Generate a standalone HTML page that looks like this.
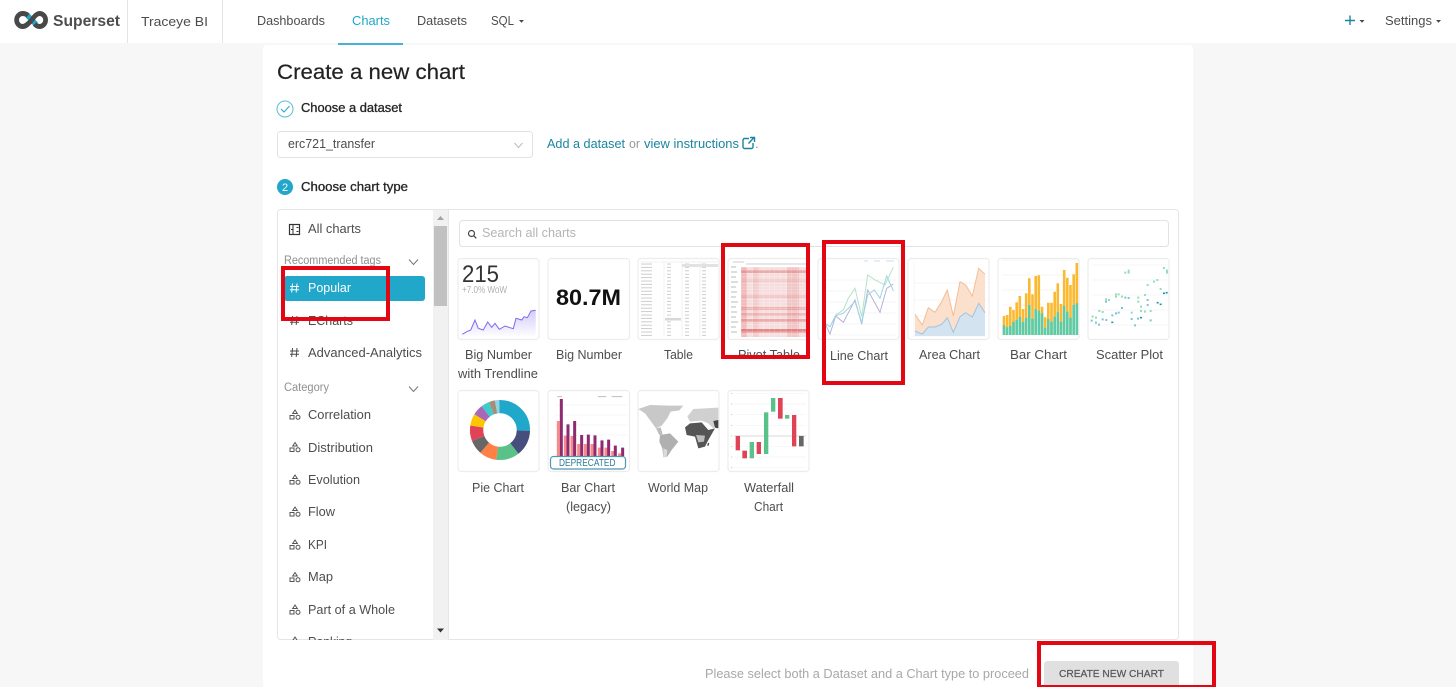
<!DOCTYPE html>
<html><head><meta charset="utf-8"><title>Create a new chart</title>
<style>
html,body{margin:0;padding:0;width:1456px;height:687px;overflow:hidden;background:#f7f7f7}
svg{display:block}
text{font-family:"Liberation Sans",sans-serif;font-size:12.8px;fill:#4d4d4d}
.m{stroke:#333;stroke-width:.35px;fill:#222}
.g{font-size:11.5px;fill:#8f8f8f}
.l{text-anchor:middle;font-size:12.8px}
.tile{fill:#fff;stroke:#ececec;stroke-width:1.2}
.red{fill:none;stroke:#e30613;stroke-width:4}
.ic{fill:none;stroke:#555;stroke-width:1}
</style></head><body>
<svg width="1456" height="687" viewBox="0 0 1456 687" xmlns="http://www.w3.org/2000/svg">
<defs>
<clipPath id="pc"><rect x="278" y="210" width="155" height="430"/></clipPath>
<linearGradient id="sp" x1="0" y1="0" x2="0" y2="1"><stop offset="0" stop-color="#b9b0f5" stop-opacity=".65"/><stop offset="1" stop-color="#b9b0f5" stop-opacity=".03"/></linearGradient>
<pattern id="gridw" x="741" y="267" width="5.6" height="3.2" patternUnits="userSpaceOnUse"><path d="M0 0H5.6M0 0V3.2" stroke="#fff" stroke-width=".8" fill="none" opacity=".4"/></pattern>
<pattern id="tr" x="640" y="263" width="80" height="3.4" patternUnits="userSpaceOnUse"><path d="M1 1H12M27 1H31M45 1H49M62 1H66" stroke="#c4c4c4" stroke-width=".9" fill="none"/></pattern>
</defs>

<rect width="1456" height="687" fill="#f7f7f7"/>
<!-- header -->
<rect width="1456" height="43" fill="#fff"/>
<path d="M127.5 0V43M222.5 0V43" stroke="#e4e4e4" stroke-width="1"/>
<g transform="scale(.95 1)">
<path d="M29 15.5L38 24.5" stroke="#20a7c9" stroke-width="5.5" fill="none"/>
<path d="M33.5 20C37 15 39.5 13.5 41.5 13.5a6.5 6.5 0 0 1 0 13c-2 0-3.5-.8-5-2.5M29.5 15.5C28 14.3 26 13.5 24 13.5a6.5 6.5 0 0 0 0 13c2.5 0 5-1.8 9.5-6.5" stroke="#484848" stroke-width="5" fill="none"/>
</g>
<text x="53" y="26" textLength="67" lengthAdjust="spacingAndGlyphs" style="font-size:16px;font-weight:bold">Superset</text>
<text x="141" y="26" textLength="67" lengthAdjust="spacingAndGlyphs" style="font-size:13px">Traceye BI</text>
<text x="257" y="25" textLength="68" lengthAdjust="spacingAndGlyphs">Dashboards</text>
<text x="352" y="25" textLength="38" lengthAdjust="spacingAndGlyphs" style="fill:#20a7c9">Charts</text>
<text x="417" y="25" textLength="50" lengthAdjust="spacingAndGlyphs">Datasets</text>
<text x="491" y="25" textLength="23" lengthAdjust="spacingAndGlyphs">SQL</text>
<path d="M519 20h5l-2.5 2.800z" fill="#484848"/>
<rect x="338" y="43" width="65" height="2" fill="#43b3d1"/>
<path d="M1350 15.5V25M1345 20.5h10" stroke="#1a85a0" stroke-width="1.4"/>
<path d="M1359.5 20h5l-2.5 2.800z" fill="#484848"/>
<text x="1385" y="25" textLength="47" lengthAdjust="spacingAndGlyphs">Settings</text>
<path d="M1436 20h5l-2.5 2.800z" fill="#484848"/>

<!-- card -->
<rect x="263" y="45" width="930" height="660" rx="4" fill="#fff"/>
<text x="277" y="79" textLength="188" lengthAdjust="spacingAndGlyphs" style="font-size:21.5px;fill:#222;stroke:#222;stroke-width:.2px">Create a new chart</text>

<circle cx="285" cy="109" r="8" fill="#fff" stroke="#5cbcd6" stroke-width="1"/>
<path d="M281 109l3 3 5.5-6" fill="none" stroke="#20a7c9" stroke-width="1"/>
<text class="m" x="301" y="112" textLength="101" lengthAdjust="spacingAndGlyphs">Choose a dataset</text>

<rect x="277.5" y="131.5" width="255" height="26" rx="3" fill="#fff" stroke="#e2e2e2"/>
<text x="288" y="148" textLength="87" lengthAdjust="spacingAndGlyphs">erc721_transfer</text>
<path d="M514.5 143l4 4.5 4-4.5" fill="none" stroke="#bbb" stroke-width="1"/>
<text x="547" y="148" textLength="78" lengthAdjust="spacingAndGlyphs" style="fill:#1a85a0">Add a dataset</text>
<text x="629" y="148" textLength="11" lengthAdjust="spacingAndGlyphs" style="fill:#999">or</text>
<text x="644" y="148" textLength="95" lengthAdjust="spacingAndGlyphs" style="fill:#1a85a0">view instructions</text>
<path d="M749 138.5h-4.500a1.5 1.5 0 0 0-1.5 1.5v7a1.5 1.5 0 0 0 1.5 1.5h7a1.5 1.5 0 0 0 1.5-1.5v-4M748.5 143.5l5.5-6M750 137.5h4.500v4.500" fill="none" stroke="#1a85a0" stroke-width="1.4"/>
<text x="755" y="148" style="fill:#999">.</text>

<circle cx="285" cy="187" r="8" fill="#20a7c9"/>
<text x="285" y="191" text-anchor="middle" style="font-size:11px;fill:#fff">2</text>
<text class="m" x="301" y="191" textLength="107" lengthAdjust="spacingAndGlyphs">Choose chart type</text>

<!-- panel -->
<rect x="277.5" y="209.5" width="901" height="430" rx="3" fill="#fff" stroke="#e6e6e6"/>
<rect x="433" y="210" width="15" height="430" fill="#f1f1f1"/>
<path d="M448.5 210V640" stroke="#e6e6e6"/>
<rect x="434" y="226" width="13" height="80" fill="#c1c1c1"/>
<path d="M437 220h7l-3.5-4z" fill="#a3a3a3"/>
<path d="M437 628.5h7l-3.5 4z" fill="#333"/>

<!-- sidebar -->
<g clip-path="url(#pc)">
<rect x="289.5" y="224.5" width="10" height="10" stroke="#333" fill="none" stroke-width="1.2"/><path d="M293 225v9M296.5 227.5h2M291 229.5h2M296.5 231.5h2" stroke="#333" fill="none"/>
<text x="308" y="233" textLength="53" lengthAdjust="spacingAndGlyphs">All charts</text>
<text class="g" x="284" y="264" textLength="97" lengthAdjust="spacingAndGlyphs">Recommended tags</text>
<path d="M409 259.5l4.5 5 4.5-5" fill="none" stroke="#777"/>
<rect x="284" y="276" width="141" height="25" rx="3" fill="#20a7c9"/>
<path d="M292.5 283.5l-.8 9M297 283.5l-.8 9M290 286.5h9M290 289.800h9" stroke="#fff" fill="none"/>
<text x="308" y="292" textLength="43" lengthAdjust="spacingAndGlyphs" style="fill:#fff">Popular</text>
<path d="M292.5 316l-.8 9M297 316l-.8 9M290 319h9M290 322.3h9" stroke="#484848" fill="none"/>
<text x="308" y="325" textLength="45" lengthAdjust="spacingAndGlyphs">ECharts</text>
<path d="M292.5 348l-.8 9M297 348l-.8 9M290 351h9M290 354.3h9" stroke="#484848" fill="none"/>
<text x="308" y="357" textLength="114" lengthAdjust="spacingAndGlyphs">Advanced-Analytics</text>
<text class="g" x="284" y="391" textLength="45" lengthAdjust="spacingAndGlyphs">Category</text>
<path d="M409 386.5l4.5 5 4.5-5" fill="none" stroke="#777"/>

<g class="ic"><path d="M295 410l2.3 3.5h-4.600zM290 415.5h4v3.5h-4z"/><circle cx="298" cy="417.3" r="2"/></g>
<text x="308" y="419" textLength="63" lengthAdjust="spacingAndGlyphs">Correlation</text>
<g class="ic" transform="translate(0 32.5)"><path d="M295 410l2.3 3.5h-4.600zM290 415.5h4v3.5h-4z"/><circle cx="298" cy="417.3" r="2"/></g>
<text x="308" y="452" textLength="65" lengthAdjust="spacingAndGlyphs">Distribution</text>
<g class="ic" transform="translate(0 65)"><path d="M295 410l2.3 3.5h-4.600zM290 415.5h4v3.5h-4z"/><circle cx="298" cy="417.3" r="2"/></g>
<text x="308" y="484" textLength="52" lengthAdjust="spacingAndGlyphs">Evolution</text>
<g class="ic" transform="translate(0 97)"><path d="M295 410l2.3 3.5h-4.600zM290 415.5h4v3.5h-4z"/><circle cx="298" cy="417.3" r="2"/></g>
<text x="308" y="516" textLength="27" lengthAdjust="spacingAndGlyphs">Flow</text>
<g class="ic" transform="translate(0 130)"><path d="M295 410l2.3 3.5h-4.600zM290 415.5h4v3.5h-4z"/><circle cx="298" cy="417.3" r="2"/></g>
<text x="308" y="549" textLength="19" lengthAdjust="spacingAndGlyphs">KPI</text>
<g class="ic" transform="translate(0 162.5)"><path d="M295 410l2.3 3.5h-4.600zM290 415.5h4v3.5h-4z"/><circle cx="298" cy="417.3" r="2"/></g>
<text x="308" y="581" textLength="25" lengthAdjust="spacingAndGlyphs">Map</text>
<g class="ic" transform="translate(0 195)"><path d="M295 410l2.3 3.5h-4.600zM290 415.5h4v3.5h-4z"/><circle cx="298" cy="417.3" r="2"/></g>
<text x="308" y="614" textLength="87" lengthAdjust="spacingAndGlyphs">Part of a Whole</text>
<g class="ic" transform="translate(0 227)"><path d="M295 410l2.3 3.5h-4.600zM290 415.5h4v3.5h-4z"/><circle cx="298" cy="417.3" r="2"/></g>
<text x="308" y="646" textLength="44" lengthAdjust="spacingAndGlyphs">Ranking</text>
</g>

<!-- search -->
<rect x="459.5" y="220.5" width="709" height="26" rx="3" fill="#fff" stroke="#e2e2e2"/>
<circle cx="471.5" cy="233.5" r="3" fill="none" stroke="#444" stroke-width="1.2"/><path d="M473.8 235.8l2.5 2.5" stroke="#444" stroke-width="1.2"/>
<text x="482" y="237" textLength="94" lengthAdjust="spacingAndGlyphs" style="fill:#b5b5b5">Search all charts</text>

<!-- tiles row 1 -->
<rect class="tile" x="458" y="258.5" width="81" height="81" rx="3"/>
<rect class="tile" x="548" y="258.5" width="81.5" height="81" rx="3"/>
<rect class="tile" x="638" y="258.5" width="81" height="81" rx="3"/>
<rect class="tile" x="728" y="258.5" width="81" height="81" rx="3"/>
<rect class="tile" x="818" y="258.5" width="81" height="81" rx="3"/>
<rect class="tile" x="908" y="258.5" width="81" height="81" rx="3"/>
<rect class="tile" x="998" y="258.5" width="81" height="81" rx="3"/>
<rect class="tile" x="1088" y="258.5" width="81" height="81" rx="3"/>

<!-- big number trend -->
<text x="462" y="282" textLength="37" lengthAdjust="spacingAndGlyphs" style="font-size:24px;fill:#333">215</text>
<text x="462" y="293" textLength="45" lengthAdjust="spacingAndGlyphs" style="font-size:10px;fill:#b0b0b0">+7.0% WoW</text>
<path d="M462.3 334.3L466.7 331.7 470.7 330 475 320 478.3 328.3 483.3 330 487.7 322 491.7 327.3 495 323.3 499.3 329.3 505 326 513.3 328.7 516 318.3 521.7 320 524 316.7 527.3 317.7 531 311 535.7 310.3V336H462.3Z" fill="url(#sp)"/>
<path d="M462.3 334.3L466.7 331.7 470.7 330 475 320 478.3 328.3 483.3 330 487.7 322 491.7 327.3 495 323.3 499.3 329.3 505 326 513.3 328.7 516 318.3 521.7 320 524 316.7 527.3 317.7 531 311 535.7 310.3" fill="none" stroke="#7b6cf0" stroke-width="1"/>
<!-- big number -->
<text x="556" y="305" textLength="65" lengthAdjust="spacingAndGlyphs" style="font-size:22px;font-weight:bold;fill:#111">80.7M</text>
<!-- table -->
<rect x="640" y="263" width="78" height="74" fill="url(#tr)"/>
<rect x="682" y="264" width="36" height="3" fill="#e2e2e2"/>
<rect x="665" y="318" width="16" height="2.5" fill="#d8d8d8"/>
<path d="M640.5 262H718M664 262V337M682 262V337M700 262V337" stroke="#e6e6e6" stroke-width=".6" fill="none"/>
<!-- pivot -->
<rect x="741" y="267" width="67" height="70" fill="#f6dede"/>
<g fill="#dd6a6a">
<rect x="741" y="270" width="67" height="3" opacity=".45"/>
<rect x="741" y="279" width="67" height="3" opacity=".15"/>
<rect x="741" y="295" width="67" height="3" opacity=".2"/>
<rect x="741" y="307" width="67" height="3" opacity=".35"/>
<rect x="741" y="313" width="67" height="3" opacity=".3"/>
<rect x="741" y="319" width="67" height="3" opacity=".45"/>
<rect x="741" y="329" width="67" height="3.4" opacity=".75"/>
<rect x="741" y="267" width="6" height="70" opacity=".3"/>
<rect x="753" y="267" width="6" height="70" opacity=".15"/>
<rect x="787" y="267" width="12" height="70" opacity=".2"/>
</g>
<rect x="741" y="267" width="67" height="70" fill="url(#gridw)"/>
<path d="M731 267H736M731 272H737M731 277H736M731 282H738M731 287H736M731 292H737M731 297H736M731 302H738M731 307H736M731 312H737M731 317H736M731 322H738M731 327H736M731 332H737" stroke="#bbb" stroke-width="1"/>
<path d="M733 262H744M746 264H806" stroke="#ccc" stroke-width="1"/>
<!-- line chart -->
<path d="M825 280H896M825 291H896M825 302H896M825 313H896M825 324H896M825 335H896" stroke="#f3f3f3" stroke-width=".7"/>
<path d="M864 261h4M874 261h6M886 261h8" stroke="#cde" stroke-width="1"/>
<path d="M825 323.3L830 326.7 835.7 315 843.3 310 848.3 298.3 855 288.3 861.7 316.7 867.7 275 875 280 885 285 893.3 267.3" fill="none" stroke="#b4e2c9" stroke-width="1"/>
<path d="M825 323.3L830 334 835.7 316 843.3 322.3 855 300 861.7 324.3 867.7 290 880 312.3 886.7 288.3 893.3 284" fill="none" stroke="#b5b3d6" stroke-width="1"/>
<path d="M825 323.3L830 326.7 835.7 315.7 843.3 313.3 855 301.7 861.7 322.3 867.7 295 874.3 290 880 298.3 886.7 276 893.3 290.7" fill="none" stroke="#9ad6e5" stroke-width="1"/>
<!-- area chart -->
<path d="M914 262V336H987M914 283H987M914 300H987M914 316H987" stroke="#f1f1f1" stroke-width=".7" fill="none"/>
<path d="M915 314.3L922.3 325 928.3 307.7 935 312.3 941.7 301.7 947.3 290 953.3 316 960 281.7 965.7 285 972.3 296 978.7 268.3 985 274.3V312.7L978.7 303.3 972.3 317 965.7 312.7 960 316.7 953.3 332.3 947.3 317.7 941.7 324.3 935 327 928.3 327 922.3 334 915 331Z" fill="#fbe0cd"/>
<path d="M915 331L922.3 334 928.3 327 935 327 941.7 324.3 947.3 317.7 953.3 332.3 960 316.7 965.7 312.7 972.3 317 978.7 303.3 985 312.7V336H915Z" fill="#d3e3f0"/>
<path d="M915 314.3L922.3 325 928.3 307.7 935 312.3 941.7 301.7 947.3 290 953.3 316 960 281.7 965.7 285 972.3 296 978.7 268.3 985 274.3" fill="none" stroke="#f5bd95" stroke-width="1"/>
<path d="M915 331L922.3 334 928.3 327 935 327 941.7 324.3 947.3 317.7 953.3 332.3 960 316.7 965.7 312.7 972.3 317 978.7 303.3 985 312.7" fill="none" stroke="#a6c3da" stroke-width="1"/>
<!-- bar chart -->
<path d="M1002 260H1078M1002 275H1078M1002 290H1078M1002 305H1078M1002 320H1078" stroke="#f3f3f3" stroke-width=".7"/>
<path stroke="#fbb931" stroke-width="2.6" fill="none" d="M1004 316V335M1007.2 315V335M1010.3 306.7V335M1013.5 310V335M1016.7 302.3V335M1019.8 296V335M1023 309V335M1026.2 293.3V335M1029.3 278.3V335M1032.5 294.3V335M1035.7 276V335M1038.8 275.3V335M1042 306.7V335M1045.2 317.3V335M1048.3 302.7V335M1051.5 302.7V335M1054.7 291.7V335M1057.8 283.3V335M1061 304V335M1064.2 270V335M1067.3 277.7V335M1070.5 285V335M1073.7 274.3V335M1076.8 263V335"/>
<path stroke="#5ccbaa" stroke-width="2.6" fill="none" d="M1004 325.3V335M1007.2 327.3V335M1010.3 325.7V335M1013.5 321.7V335M1016.7 320V335M1019.8 316.7V335M1023 322V335M1026.2 317.7V335M1029.3 305V335M1032.5 318.7V335M1035.7 309V335M1038.8 310.7V335M1042 313.3V335M1045.2 327.7V335M1048.3 319V335M1051.5 321.7V335M1054.7 316.7V335M1057.8 312.3V335M1061 321.7V335M1064.2 305.7V335M1067.3 311.7V335M1070.5 317.7V335M1073.7 305V335M1076.8 303.3V335"/>
<!-- scatter -->
<path d="M1092 265H1168M1092 280H1168M1092 295H1168M1092 310H1168M1092 325H1168" stroke="#f4f4f4" stroke-width=".7"/>
<g transform="translate(990 250) scale(.3333)">
<path stroke="#93deba" stroke-width="6" fill="none" d="M305 200h6M315 203h6M325 183h6M335 186h6M345 148h6M354 150h6M375 133h6M383 133h6M375 140h6M393 140h6M413 62h6M422 188h6M442 143h6M442 155h6M450 170h6M450 183h6M462 135h6M462 185h6M470 105h6M479 183h6M489 95h6M499 90h6M509 117h6M519 54h6M528 62h6M528 68h6M403 68h6M413 68h6"/>
<path stroke="#7fc4d6" stroke-width="6" fill="none" d="M302 212h6M315 218h6M324 224h6M335 208h6M346 210h6M345 155h6M364 196h6M375 190h6M383 188h6M393 174h6M403 143h6M413 144h6M422 207h6M432 226h6M441 206h6M470 150h6M470 165h6M479 211h6"/>
<path stroke="#2b8fa8" stroke-width="5" fill="none" d="M364 217h6M450 203h6M500 158h6M509 163h6M519 130h6M527 128h6"/>
</g>
<!-- labels row 1 -->
<text class="l" x="498.5" y="359" textLength="67" lengthAdjust="spacingAndGlyphs">Big Number</text>
<text class="l" x="498" y="378" textLength="80" lengthAdjust="spacingAndGlyphs">with Trendline</text>
<text class="l" x="589" y="359" textLength="66" lengthAdjust="spacingAndGlyphs">Big Number</text>
<text class="l" x="678.5" y="359" textLength="29" lengthAdjust="spacingAndGlyphs">Table</text>
<text class="l" x="769" y="359" textLength="62" lengthAdjust="spacingAndGlyphs">Pivot Table</text>
<text class="l" x="859" y="360" textLength="58" lengthAdjust="spacingAndGlyphs">Line Chart</text>
<text class="l" x="949.5" y="359" textLength="61" lengthAdjust="spacingAndGlyphs">Area Chart</text>
<text class="l" x="1038.5" y="359" textLength="57" lengthAdjust="spacingAndGlyphs">Bar Chart</text>
<text class="l" x="1129.5" y="359" textLength="67" lengthAdjust="spacingAndGlyphs">Scatter Plot</text>

<!-- tiles row 2 -->
<rect class="tile" x="458" y="390.5" width="81" height="81" rx="3"/>
<rect class="tile" x="548" y="390.5" width="81.5" height="81" rx="3"/>
<rect class="tile" x="638" y="390.5" width="81" height="81" rx="3"/>
<rect class="tile" x="728" y="390.5" width="81" height="81" rx="3"/>

<!-- pie -->
<g transform="rotate(-90 500 430)" fill="none" stroke-width="13.3">
<circle cx="500" cy="430" r="23.4" pathLength="360" stroke="#1fa8c9" stroke-dasharray="92 268"/>
<circle cx="500" cy="430" r="23.4" pathLength="360" stroke="#454e7c" stroke-dasharray="51 309" stroke-dashoffset="-92"/>
<circle cx="500" cy="430" r="23.4" pathLength="360" stroke="#5ac189" stroke-dasharray="45 315" stroke-dashoffset="-143"/>
<circle cx="500" cy="430" r="23.4" pathLength="360" stroke="#ff7f44" stroke-dasharray="34 326" stroke-dashoffset="-188"/>
<circle cx="500" cy="430" r="23.4" pathLength="360" stroke="#666" stroke-dasharray="28 332" stroke-dashoffset="-222"/>
<circle cx="500" cy="430" r="23.4" pathLength="360" stroke="#e04355" stroke-dasharray="30 330" stroke-dashoffset="-250"/>
<circle cx="500" cy="430" r="23.4" pathLength="360" stroke="#fcc700" stroke-dasharray="23 337" stroke-dashoffset="-280"/>
<circle cx="500" cy="430" r="23.4" pathLength="360" stroke="#a868b7" stroke-dasharray="21 339" stroke-dashoffset="-303"/>
<circle cx="500" cy="430" r="23.4" pathLength="360" stroke="#3ccccb" stroke-dasharray="16 344" stroke-dashoffset="-324"/>
<circle cx="500" cy="430" r="23.4" pathLength="360" stroke="#a38f79" stroke-dasharray="12 348" stroke-dashoffset="-340"/>
<circle cx="500" cy="430" r="23.4" pathLength="360" stroke="#8fd3e4" stroke-dasharray="8 352" stroke-dashoffset="-352"/>
</g>

<!-- legacy bar -->
<g transform="translate(450 385) scale(.3333)">
<path d="M315 60H530M315 90H530M315 120H530M315 150H530M315 180H530" stroke="#f4f4f4" stroke-width="2"/>
<path stroke="#f98a8a" stroke-width="9" fill="none" d="M325 108V213M346 152V213M366 153V213M386 177V213M406 177V213M426 177V213M448 188V213M468 188V213M488 198V213M509 205V213"/>
<path stroke="#8e2a72" stroke-width="9" fill="none" d="M334 42V213M354 118V213M374 108V213M395 150V213M415 149V213M435 151V213M456 166V213M476 164V213M496 182V213M518 188V213"/>
<path d="M322 35h14M444 35h25M485 35h32" stroke="#c8b8c4" stroke-width="3"/>
</g>
<rect x="550.5" y="456.5" width="75" height="12.5" rx="3" fill="#fff" stroke="#4f97ad" stroke-width="1.2"/>
<text x="559" y="466" textLength="56.5" lengthAdjust="spacingAndGlyphs" style="font-size:10px;fill:#2a7e98">DEPRECATED</text>

<!-- world map -->
<g transform="translate(630 385) scale(.3333)">
<path fill="#c8c8c8" d="M25 72L60 60 120 62 160 62 148 76 122 80 112 100 95 122 78 130 62 108 45 85Z"/>
<path fill="#bdbdbd" d="M78 130L92 127 98 148 88 150Z"/>
<path fill="#b0b0b0" d="M90 150L120 145 145 170 125 195 112 215 100 217 97 190 88 170Z"/>
<path fill="#dadada" d="M100 190L112 195 110 215 100 217Z"/>
<path fill="#d0d0d0" d="M172 95L190 72 265 68 265 120 250 130 235 115 215 107 180 110Z"/>
<path fill="#555" d="M165 127L180 115 215 112 235 135 255 130 235 165 225 185 205 190 195 155 170 150Z"/>
<path fill="#bbb" d="M198 150L225 152 222 170 205 172Z"/>
<path fill="#444" d="M250 108L265 105 265 130 255 128Z"/>
<path fill="#444" d="M233 175l5-2-2 9-4 1z"/>
</g>

<!-- waterfall -->
<g transform="translate(630 385) scale(.3333)">
<path d="M312 25H528M312 57H528M312 89H528M312 121H528M312 185H528M312 216H528M312 248H528" stroke="#f3f3f3" stroke-width="2"/>
<path d="M312 153H528" stroke="#ccc" stroke-width="2"/>
<path d="M303 25h4M303 57h4M303 89h4M303 121h4M303 153h4M303 185h4M303 216h4M303 248h4" stroke="#ccc" stroke-width="3"/>
<g fill="#e04355"><rect x="317" y="153" width="13" height="43"/><rect x="337" y="197" width="14" height="23"/><rect x="380" y="171" width="13" height="36"/><rect x="444" y="39" width="14" height="62"/><rect x="486" y="90" width="13" height="94"/></g>
<g fill="#5ac189"><rect x="359" y="171" width="13" height="49"/><rect x="402" y="82" width="13" height="125"/><rect x="423" y="39" width="13" height="41"/><rect x="465" y="90" width="13" height="11"/></g>
<rect x="507" y="153" width="14" height="31" fill="#666"/>
</g>

<!-- labels row 2 -->
<text class="l" x="498" y="492" textLength="52" lengthAdjust="spacingAndGlyphs">Pie Chart</text>
<text class="l" x="588" y="492" textLength="54" lengthAdjust="spacingAndGlyphs">Bar Chart</text>
<text class="l" x="588.5" y="511" textLength="45" lengthAdjust="spacingAndGlyphs">(legacy)</text>
<text class="l" x="678" y="492" textLength="60" lengthAdjust="spacingAndGlyphs">World Map</text>
<text class="l" x="769" y="492" textLength="50" lengthAdjust="spacingAndGlyphs">Waterfall</text>
<text class="l" x="768.5" y="511" textLength="29" lengthAdjust="spacingAndGlyphs">Chart</text>

<!-- footer -->
<text x="705" y="678" textLength="324" lengthAdjust="spacingAndGlyphs" style="fill:#a8a8a8">Please select both a Dataset and a Chart type to proceed</text>
<rect x="1044" y="661" width="135" height="30" rx="3" fill="#e0e0e0"/>
<text x="1059" y="677" textLength="105" lengthAdjust="spacingAndGlyphs" style="font-size:10.5px;fill:#555;stroke:#555;stroke-width:.2px">CREATE NEW CHART</text>

<!-- red annotations -->
<rect class="red" x="283" y="268" width="105" height="51"/>
<rect class="red" x="723" y="245" width="85" height="112"/>
<rect class="red" x="824" y="242" width="79" height="141"/>
<rect class="red" x="1039" y="643" width="175" height="44"/>
</svg>
</body></html>
